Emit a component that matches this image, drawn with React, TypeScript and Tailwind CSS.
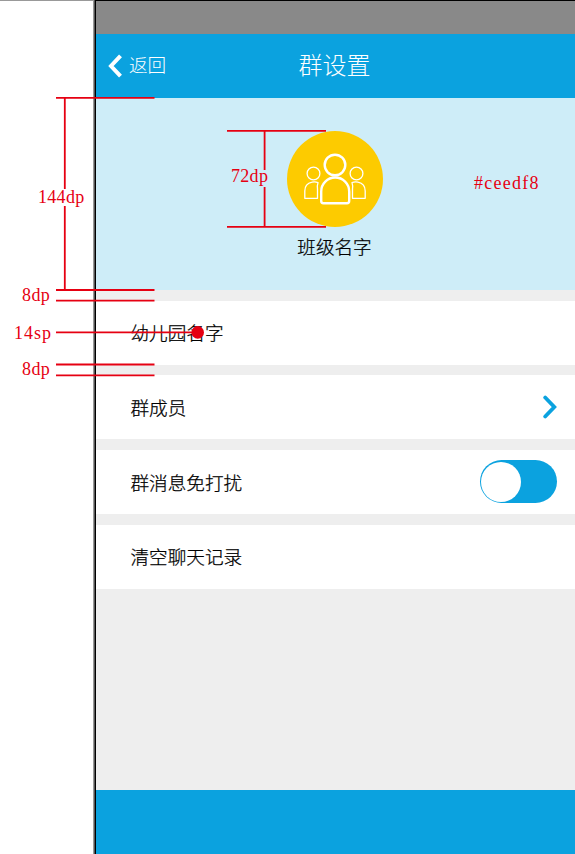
import React from "react";

const cjk = "font-['Noto_Sans_CJK_SC',sans-serif]";
const bodyText = "text-[18.6px] leading-none font-light text-black [-webkit-text-stroke:0.25px_black]";

function Row({ label, children }: { label: string; children?: React.ReactNode }) {
  return (
    <div className="flex h-[64.2px] items-center justify-between bg-white pl-[34.5px] pr-[18.5px]">
      <span className={bodyText}>{label}</span>
      {children}
    </div>
  );
}

function Members() {
  return (
    <svg className="h-24 w-24 shrink-0" viewBox="0 0 96 96" fill="none" stroke="#fff" strokeLinejoin="round">
      <circle cx="48" cy="48" r="48" fill="#fdcb00" stroke="none" />
      <circle cx="48" cy="34" r="10.3" strokeWidth="2.4" />
      <path d="M34.2 60.5a14 14 0 0 1 28 0V70q0 2.2-2.2 2.2H36.4q-2.2 0-2.2-2.2Z" strokeWidth="2.4" />
      <circle cx="26.5" cy="42.5" r="6.4" strokeWidth="1.3" />
      <circle cx="69.5" cy="42.5" r="6.4" strokeWidth="1.3" />
      <path d="M31 51.6Q28 50.4 25 51.2Q17.8 52.8 17.8 60V67.3H30.5V58Q30 54.5 31 51.6Z" strokeWidth="1.3" />
      <path d="M65 51.6Q68 50.4 71 51.2Q78.2 52.8 78.2 60V67.3H65.5V58Q66 54.5 65 51.6Z" strokeWidth="1.3" />
    </svg>
  );
}

const labelBase = "absolute whitespace-nowrap font-['Liberation_Serif',serif] text-[18px] leading-5 text-[#e60012]";

function Annotations() {
  return (
    <div className="pointer-events-none absolute inset-0">
      <svg className="absolute inset-0" width="575" height="854" stroke="#e60012" strokeWidth="1.8" fill="none">
        <path d="M56 97.8H154.5M56 290H154.5M56 300.6H154.5M56 332.4H198M56 364.5H154.5M56 375.3H154.5M227 130.8H326M227 226.8H326" />
        <path d="M64.8 98V189M64.8 206V290M264.6 131V170M264.6 187V227" />
        <circle cx="197.7" cy="332.4" r="6.3" fill="#e60012" stroke="none" />
      </svg>
      <span className={`${labelBase} left-[38px] top-[187px] tracking-[0.3px]`}>144dp</span>
      <span className={`${labelBase} left-[231px] top-[166px] tracking-[0.3px]`}>72dp</span>
      <span className={`${labelBase} left-[474px] top-[173px] tracking-[1.25px]`}>#ceedf8</span>
      <span className={`${labelBase} left-[22px] top-[285px] tracking-[0.4px]`}>8dp</span>
      <span className={`${labelBase} left-[14px] top-[323px] tracking-[1px]`}>14sp</span>
      <span className={`${labelBase} left-[22px] top-[359px] tracking-[0.4px]`}>8dp</span>
    </div>
  );
}

export default function App() {
  return (
    <div className={`relative h-[854px] w-[575px] overflow-hidden bg-white ${cjk}`}>
      <div className="flex h-full">
        <div className="w-[93px] border-t border-[#999]" />
        <div className="w-px bg-[#999]" />
        <div className="w-px bg-[#555]" />
        <div className="flex flex-1 flex-col border-l border-t border-black bg-[#eeeeee]">
          <div className="h-[32.5px] bg-[#898989]" />
          <header className="grid h-16 grid-cols-[1fr_auto_1fr] items-center bg-[#0ba2df] pr-[2px] text-white">
            <div className="flex items-center pl-3">
              <svg width="14" height="24" viewBox="0 0 14 24" fill="none" stroke="#fff" strokeWidth="4">
                <path d="M12.5 1.8L3 12L12.5 22.2" />
              </svg>
              <span className="mb-[2px] ml-[7px] text-[18.6px] leading-none font-light">返回</span>
            </div>
            <h1 className="mb-[4px] text-[24px] leading-none font-light">群设置</h1>
          </header>
          <section className="flex h-[192.5px] flex-col items-center bg-[#ceedf8] pr-[2px] pt-[33px]">
            <Members />
            <span className={`mt-[10.5px] ${bodyText}`}>班级名字</span>
          </section>
          <div className="mt-[10.5px] flex flex-col gap-[10.5px]">
            <Row label="幼儿园名字" />
            <Row label="群成员">
              <svg width="14" height="24" viewBox="0 0 14 24" fill="none" stroke="#0ba2df" strokeWidth="3.8" strokeLinecap="round">
                <path d="M2.2 2.5L11.3 12L2.2 21.5" />
              </svg>
            </Row>
            <Row label="群消息免打扰">
              <div className="flex h-[43px] w-[77px] items-center rounded-full bg-[#0ba2df] pl-[1.5px]">
                <div className="h-10 w-10 rounded-full bg-white" />
              </div>
            </Row>
            <Row label="清空聊天记录" />
          </div>
          <footer className="mt-auto h-16 bg-[#0ba2df]" />
        </div>
      </div>
      <Annotations />
    </div>
  );
}
